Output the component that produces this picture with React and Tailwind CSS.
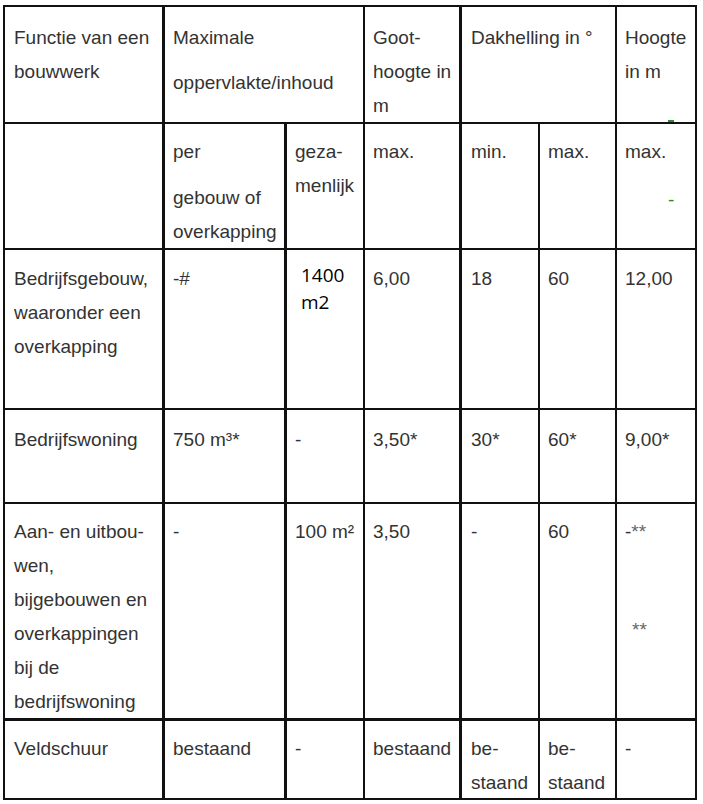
import React from "react";

// table of building rules, drawn as a css grid so every rule line lands on its pixel
function Cell({ className = "", children }) {
    return <div className={"border-[#111] " + className}>{children}</div>;
}

export default function App() {
    return (
        <div className="min-h-[804px] w-[703px] bg-white pt-[5px] pl-[3px] font-['Liberation_Sans',Arial,sans-serif] text-[19px] leading-[34px] text-[#333]">
            <div className="grid w-[694px] grid-cols-[160px_122px_78px_97px_78px_77px_80px] grid-rows-[117px_126px_160px_94px_217px_79px] border-l-2 border-t-2 border-[#111]">
                {/* header row */}
                <Cell className="border-r-[3px] border-b-2 pl-[9px] pt-[14px]">
                    Functie van een
                    <br />
                    bouwwerk
                </Cell>
                <Cell className="col-span-2 border-r-2 border-b-2 pl-2 pt-[14px]">
                    <p className="mb-[11px]">Maximale</p>
                    <p>oppervlakte/inhoud</p>
                </Cell>
                <Cell className="border-r-[3px] border-b-2 pl-2 pt-[14px]">
                    Goot-
                    <br />
                    hoogte in
                    <br />m
                </Cell>
                <Cell className="col-span-2 border-r-2 border-b-2 pl-[9px] pt-[14px]">Dakhelling in °</Cell>
                <Cell className="relative border-r-2 border-b-2 pl-2 pt-[14px]">
                    Hoogte
                    <br />
                    in m
                    <span className="absolute bottom-0 left-[51px] h-[2px] w-[6px] bg-[#2f8a2f]" />
                </Cell>

                {/* sub header */}
                <Cell className="border-r-[3px] border-b-2" />
                <Cell className="border-r-[3px] border-b-2 pl-2 pt-[11px]">
                    <p className="mb-[12px]">per</p>
                    <p>
                        gebouw of
                        <br />
                        overkapping
                    </p>
                </Cell>
                <Cell className="border-r-2 border-b-2 pl-2 pt-[11px]">
                    geza-
                    <br />
                    menlijk
                </Cell>
                <Cell className="border-r-[3px] border-b-2 pl-2 pt-[11px]">max.</Cell>
                <Cell className="border-r-2 border-b-2 pl-[9px] pt-[11px]">min.</Cell>
                <Cell className="border-r-2 border-b-2 pl-2 pt-[11px]">max.</Cell>
                <Cell className="border-r-2 border-b-2 pl-2 pt-[11px]">
                    max.
                    <div className="mt-[14px] pl-[43px] text-[#2f8a2f]">-</div>
                </Cell>

                {/* Bedrijfsgebouw */}
                <Cell className="border-r-[3px] border-b-2 pl-[9px] pt-[12px]">
                    Bedrijfsgebouw,
                    <br />
                    waaronder een
                    <br />
                    overkapping
                </Cell>
                <Cell className="border-r-[3px] border-b-2 pl-2 pt-[12px]">-#</Cell>
                <Cell className="border-r-2 border-b-2 pl-[14px] pt-[12px] font-['Open_Sans',sans-serif] leading-[27px] text-black">
                    1400
                    <br />
                    m2
                </Cell>
                <Cell className="border-r-[3px] border-b-2 pl-2 pt-[12px]">6,00</Cell>
                <Cell className="border-r-2 border-b-2 pl-[9px] pt-[12px]">18</Cell>
                <Cell className="border-r-2 border-b-2 pl-2 pt-[12px]">60</Cell>
                <Cell className="border-r-2 border-b-2 pl-2 pt-[12px]">12,00</Cell>

                {/* Bedrijfswoning */}
                <Cell className="border-r-[3px] border-b-2 pl-[9px] pt-[13px]">Bedrijfswoning</Cell>
                <Cell className="border-r-[3px] border-b-2 pl-2 pt-[13px]">750 m³*</Cell>
                <Cell className="border-r-2 border-b-2 pl-2 pt-[13px]">-</Cell>
                <Cell className="border-r-[3px] border-b-2 pl-2 pt-[13px]">3,50*</Cell>
                <Cell className="border-r-2 border-b-2 pl-[9px] pt-[13px]">30*</Cell>
                <Cell className="border-r-2 border-b-2 pl-2 pt-[13px]">60*</Cell>
                <Cell className="border-r-2 border-b-2 pl-2 pt-[13px]">9,00*</Cell>

                {/* Aan- en uitbouwen */}
                <Cell className="border-r-[3px] border-b-[3px] pl-[9px] pt-[11px]">
                    Aan- en uitbou-
                    <br />
                    wen,
                    <br />
                    bijgebouwen en
                    <br />
                    overkappingen
                    <br />
                    bij de
                    <br />
                    bedrijfswoning
                </Cell>
                <Cell className="border-r-[3px] border-b-[3px] pl-2 pt-[11px]">-</Cell>
                <Cell className="border-r-2 border-b-[3px] pl-2 pt-[11px]">100 m²</Cell>
                <Cell className="border-r-[3px] border-b-[3px] pl-2 pt-[11px]">3,50</Cell>
                <Cell className="border-r-2 border-b-[3px] pl-[9px] pt-[11px]">-</Cell>
                <Cell className="border-r-2 border-b-[3px] pl-2 pt-[11px]">60</Cell>
                <Cell className="border-r-2 border-b-[3px] pl-2 pt-[11px]">
                    <div>
                        -<span className="text-[#666]">**</span>
                    </div>
                    <div className="mt-[64px] pl-[7px] text-[#666]">**</div>
                </Cell>

                {/* Veldschuur */}
                <Cell className="border-r-[3px] border-b-2 pl-[9px] pt-[11px]">Veldschuur</Cell>
                <Cell className="border-r-[3px] border-b-2 pl-2 pt-[11px]">bestaand</Cell>
                <Cell className="border-r-2 border-b-2 pl-2 pt-[11px]">-</Cell>
                <Cell className="border-r-[3px] border-b-2 pl-2 pt-[11px]">bestaand</Cell>
                <Cell className="border-r-2 border-b-2 pl-[9px] pt-[11px]">
                    be-
                    <br />
                    staand
                </Cell>
                <Cell className="border-r-2 border-b-2 pl-2 pt-[11px]">
                    be-
                    <br />
                    staand
                </Cell>
                <Cell className="border-r-2 border-b-2 pl-2 pt-[11px]">-</Cell>
            </div>
        </div>
    );
}
